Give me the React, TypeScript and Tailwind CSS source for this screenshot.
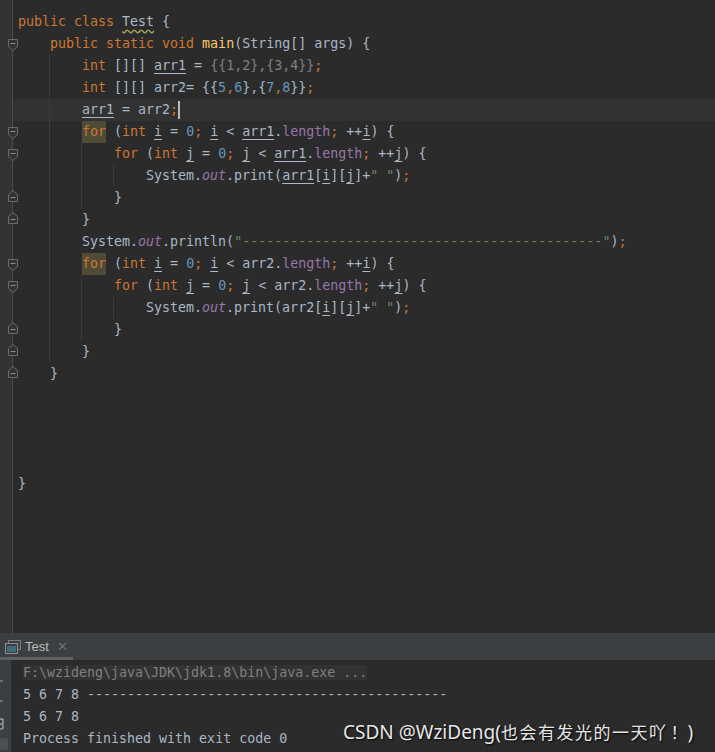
import React from "react";

type Tok = [string, string?];

const kw = "text-[#cc7832]";
const num = "text-[#6897bb]";
const str = "text-[#6a8759]";
const out = "text-[#9876aa] italic";
const fld = "text-[#9876aa]";
const fn = "text-[#ffc66d]";
const gray = "text-[#808080]";
const u = "underline underline-offset-[3px] decoration-1";
const forBg = "text-[#cc7832] bg-[#4f4b36]";

interface Line {
  indent: number;
  guides: number[];
  fold?: "open" | "close";
  tokens: Tok[];
  current?: boolean;
}

const dashes = "-".repeat(45);

const loop = (v: string, arr: string, under: boolean, hl: boolean): Tok[] => [
  ["for", hl ? forBg : kw],
  [" ("],
  ["int", kw],
  [" "],
  [v, u],
  [" = "],
  ["0", num],
  [";", kw],
  [" "],
  [v, u],
  [" < "],
  [arr, under ? u : undefined],
  ["."],
  ["length", fld],
  [";", kw],
  [" ++"],
  [v, u],
  [") {"],
];

const lines: Line[] = [
  { indent: 0, guides: [], tokens: [["public class ", kw], ["Test", "underline decoration-wavy decoration-[#a8a25c] underline-offset-[3px]"], [" {"]] },
  { indent: 1, guides: [], fold: "open", tokens: [["public static void ", kw], ["main", fn], ["(String[] args) {"]] },
  { indent: 2, guides: [1], tokens: [["int", kw], [" [][] "], ["arr1", u], [" = "], ["{{1,2},{3,4}}", gray], [";", kw]] },
  {
    indent: 2,
    guides: [1],
    tokens: [["int", kw], [" [][] arr2= {{"], ["5", num], [",", kw], ["6", num], ["},{"], ["7", num], [",", kw], ["8", num], ["}}"], [";", kw]],
  },
  { indent: 2, guides: [1], current: true, tokens: [["arr1", u], [" = arr2"], [";", kw]] },
  { indent: 2, guides: [1], fold: "open", tokens: loop("i", "arr1", true, true) },
  { indent: 3, guides: [1, 2], fold: "open", tokens: loop("j", "arr1", true, false) },
  {
    indent: 4,
    guides: [1, 2, 3],
    tokens: [["System."], ["out", out], [".print("], ["arr1", u], ["["], ["i", u], ["]["], ["j", u], ["]+"], ['" "', str], [")"], [";", kw]],
  },
  { indent: 3, guides: [1, 2], fold: "close", tokens: [["}"]] },
  { indent: 2, guides: [1], fold: "close", tokens: [["}"]] },
  { indent: 2, guides: [1], tokens: [["System."], ["out", out], [".println("], ['"' + dashes + '"', str], [")"], [";", kw]] },
  { indent: 2, guides: [1], fold: "open", tokens: loop("i", "arr2", false, true) },
  { indent: 3, guides: [1, 2], fold: "open", tokens: loop("j", "arr2", false, false) },
  {
    indent: 4,
    guides: [1, 2, 3],
    tokens: [["System."], ["out", out], [".print(arr2["], ["i", u], ["]["], ["j", u], ["]+"], ['" "', str], [")"], [";", kw]],
  },
  { indent: 3, guides: [1, 2], fold: "close", tokens: [["}"]] },
  { indent: 2, guides: [1], fold: "close", tokens: [["}"]] },
  { indent: 1, guides: [], fold: "close", tokens: [["}"]] },
  { indent: 0, guides: [], tokens: [] },
  { indent: 0, guides: [], tokens: [] },
  { indent: 0, guides: [], tokens: [] },
  { indent: 0, guides: [], tokens: [] },
  { indent: 0, guides: [], tokens: [["}"]] },
];

function FoldMarker({ kind }: { kind: "open" | "close" }) {
  if (kind === "open") {
    return (
      <svg className="absolute left-[8px] top-[6px] z-10" width="10" height="12" viewBox="0 0 10 12">
        <path d="M0.5 0.5 H9.5 V7.5 L5 11.5 L0.5 7.5 Z" fill="#313335" stroke="#6b6b6b" />
        <path d="M2.5 4.5 H7.5" stroke="#8a8a8a" />
      </svg>
    );
  }
  return (
    <svg className="absolute left-[8px] top-[3px] z-10" width="10" height="12" viewBox="0 0 10 12">
      <path d="M0.5 11.5 H9.5 V4.5 L5 0.5 L0.5 4.5 Z" fill="#313335" stroke="#6b6b6b" />
      <path d="M2.5 7.5 H7.5" stroke="#8a8a8a" />
    </svg>
  );
}

function CodeLine({ line }: { line: Line }) {
  return (
    <div className={`flex h-[22px] pl-[5px] leading-[22px] whitespace-pre ${line.current ? "bg-[#323232]" : ""}`}>
      {Array.from({ length: line.indent }).map((_, l) => (
        <span key={l} className="relative inline-block h-[22px] w-[32px] shrink-0">
          {line.guides.includes(l) && <span className="absolute left-[-1px] top-0 h-[22px] w-px bg-[#3b3b3b]" />}
        </span>
      ))}
      {line.tokens.map(([text, cls], i) => (
        <span key={i} className={cls ?? "text-[#a9b7c6]"}>
          {text}
        </span>
      ))}
      {line.current && <span className="mt-[2px] h-[18px] w-[2px] bg-[#bbbbbb]" />}
    </div>
  );
}

function ConsoleIcon() {
  return (
    <svg width="16" height="14" viewBox="0 0 16 14">
      <rect x="3.5" y="0.5" width="12" height="9" fill="none" stroke="#7a7e82" />
      <rect x="0.5" y="3.5" width="12" height="10" fill="#3c3f41" stroke="#8c9094" />
      <rect x="2" y="6" width="9" height="6" fill="#3e6d7b" />
    </svg>
  );
}

export default function App() {
  return (
    <div className="relative flex h-[752px] w-[715px] flex-col overflow-hidden bg-[#2b2b2b] font-['DejaVu_Sans_Mono',monospace] text-[13.3px] text-[#a9b7c6]">
      {/* Editor */}
      <div className="flex h-[633px] shrink-0">
        <div className="w-[13px] shrink-0 border-r border-[#4b4b4b] bg-[#313335] pt-[11px]">
          {lines.map((l, i) => (
            <div key={i} className="relative h-[22px]">
              {l.fold && <FoldMarker kind={l.fold} />}
            </div>
          ))}
        </div>
        <div className="flex-1 pt-[11px]">
          {lines.map((l, i) => (
            <CodeLine key={i} line={l} />
          ))}
        </div>
      </div>

      {/* Run tool window */}
      <div className="flex h-[27px] shrink-0 items-stretch bg-[#3c3f41]">
        <div className="flex w-[73px] items-center gap-[4px] border-b-[3px] border-[#5e6163] pl-[5px] pt-[4px]">
          <ConsoleIcon />
          <span className="font-['Liberation_Sans',sans-serif] text-[13px] text-[#bbbbbb]">Test</span>
          <span className="ml-[4px] font-['Liberation_Sans',sans-serif] text-[13px] text-[#6e7072]">✕</span>
        </div>
      </div>
      <div className="flex flex-1">
        <div className="flex w-[12px] shrink-0 flex-col items-start border-r border-[#323232] bg-[#3c3f41]">
          <span className="mt-[20px] h-[2px] w-[3px] bg-[#6a6d70]" />
          <span className="mt-[18px] h-[2px] w-[3px] bg-[#6a6d70]" />
          <svg className="mt-[16px]" width="4" height="12" viewBox="0 0 4 12">
            <path d="M0 1 H3 M3 1 V5 Q3 7 0 6 M3 7 V10 Q3 11 0 11" fill="none" stroke="#9a9da0" strokeWidth="1.5" />
          </svg>
          <span className="mt-[8px] h-[12px] w-[8px] bg-[#4b5053]" />
        </div>
        <div className="flex-1 pl-[11px] pt-[2px] leading-[22px] whitespace-pre">
          <div className="h-[22px]">
            <span className="bg-[#323232] text-[#808080]">F:\wzideng\java\JDK\jdk1.8\bin\java.exe ...</span>
          </div>
          <div className="h-[22px] text-[#a9b7c6]">5 6 7 8 {dashes}</div>
          <div className="h-[22px] text-[#a9b7c6]">5 6 7 8</div>
          <div className="h-[22px] text-[#a9b7c6]">Process finished with exit code 0</div>
        </div>
      </div>

      {/* Watermark */}
      <div className="absolute left-[343px] top-[719px] flex items-baseline whitespace-nowrap font-['Noto_Sans','Noto_Sans_CJK_SC',sans-serif] text-[19px] leading-[26px] text-[#e6e6e6] [text-shadow:1px_1px_2px_#000]">
        <span>CSDN @WziDeng(</span>
        <span className="text-[17px] tracking-[1.5px]">也会有发光的一天吖</span>
        <span className="ml-[3px] text-[17px]">！</span>
        <span>)</span>
      </div>
    </div>
  );
}
